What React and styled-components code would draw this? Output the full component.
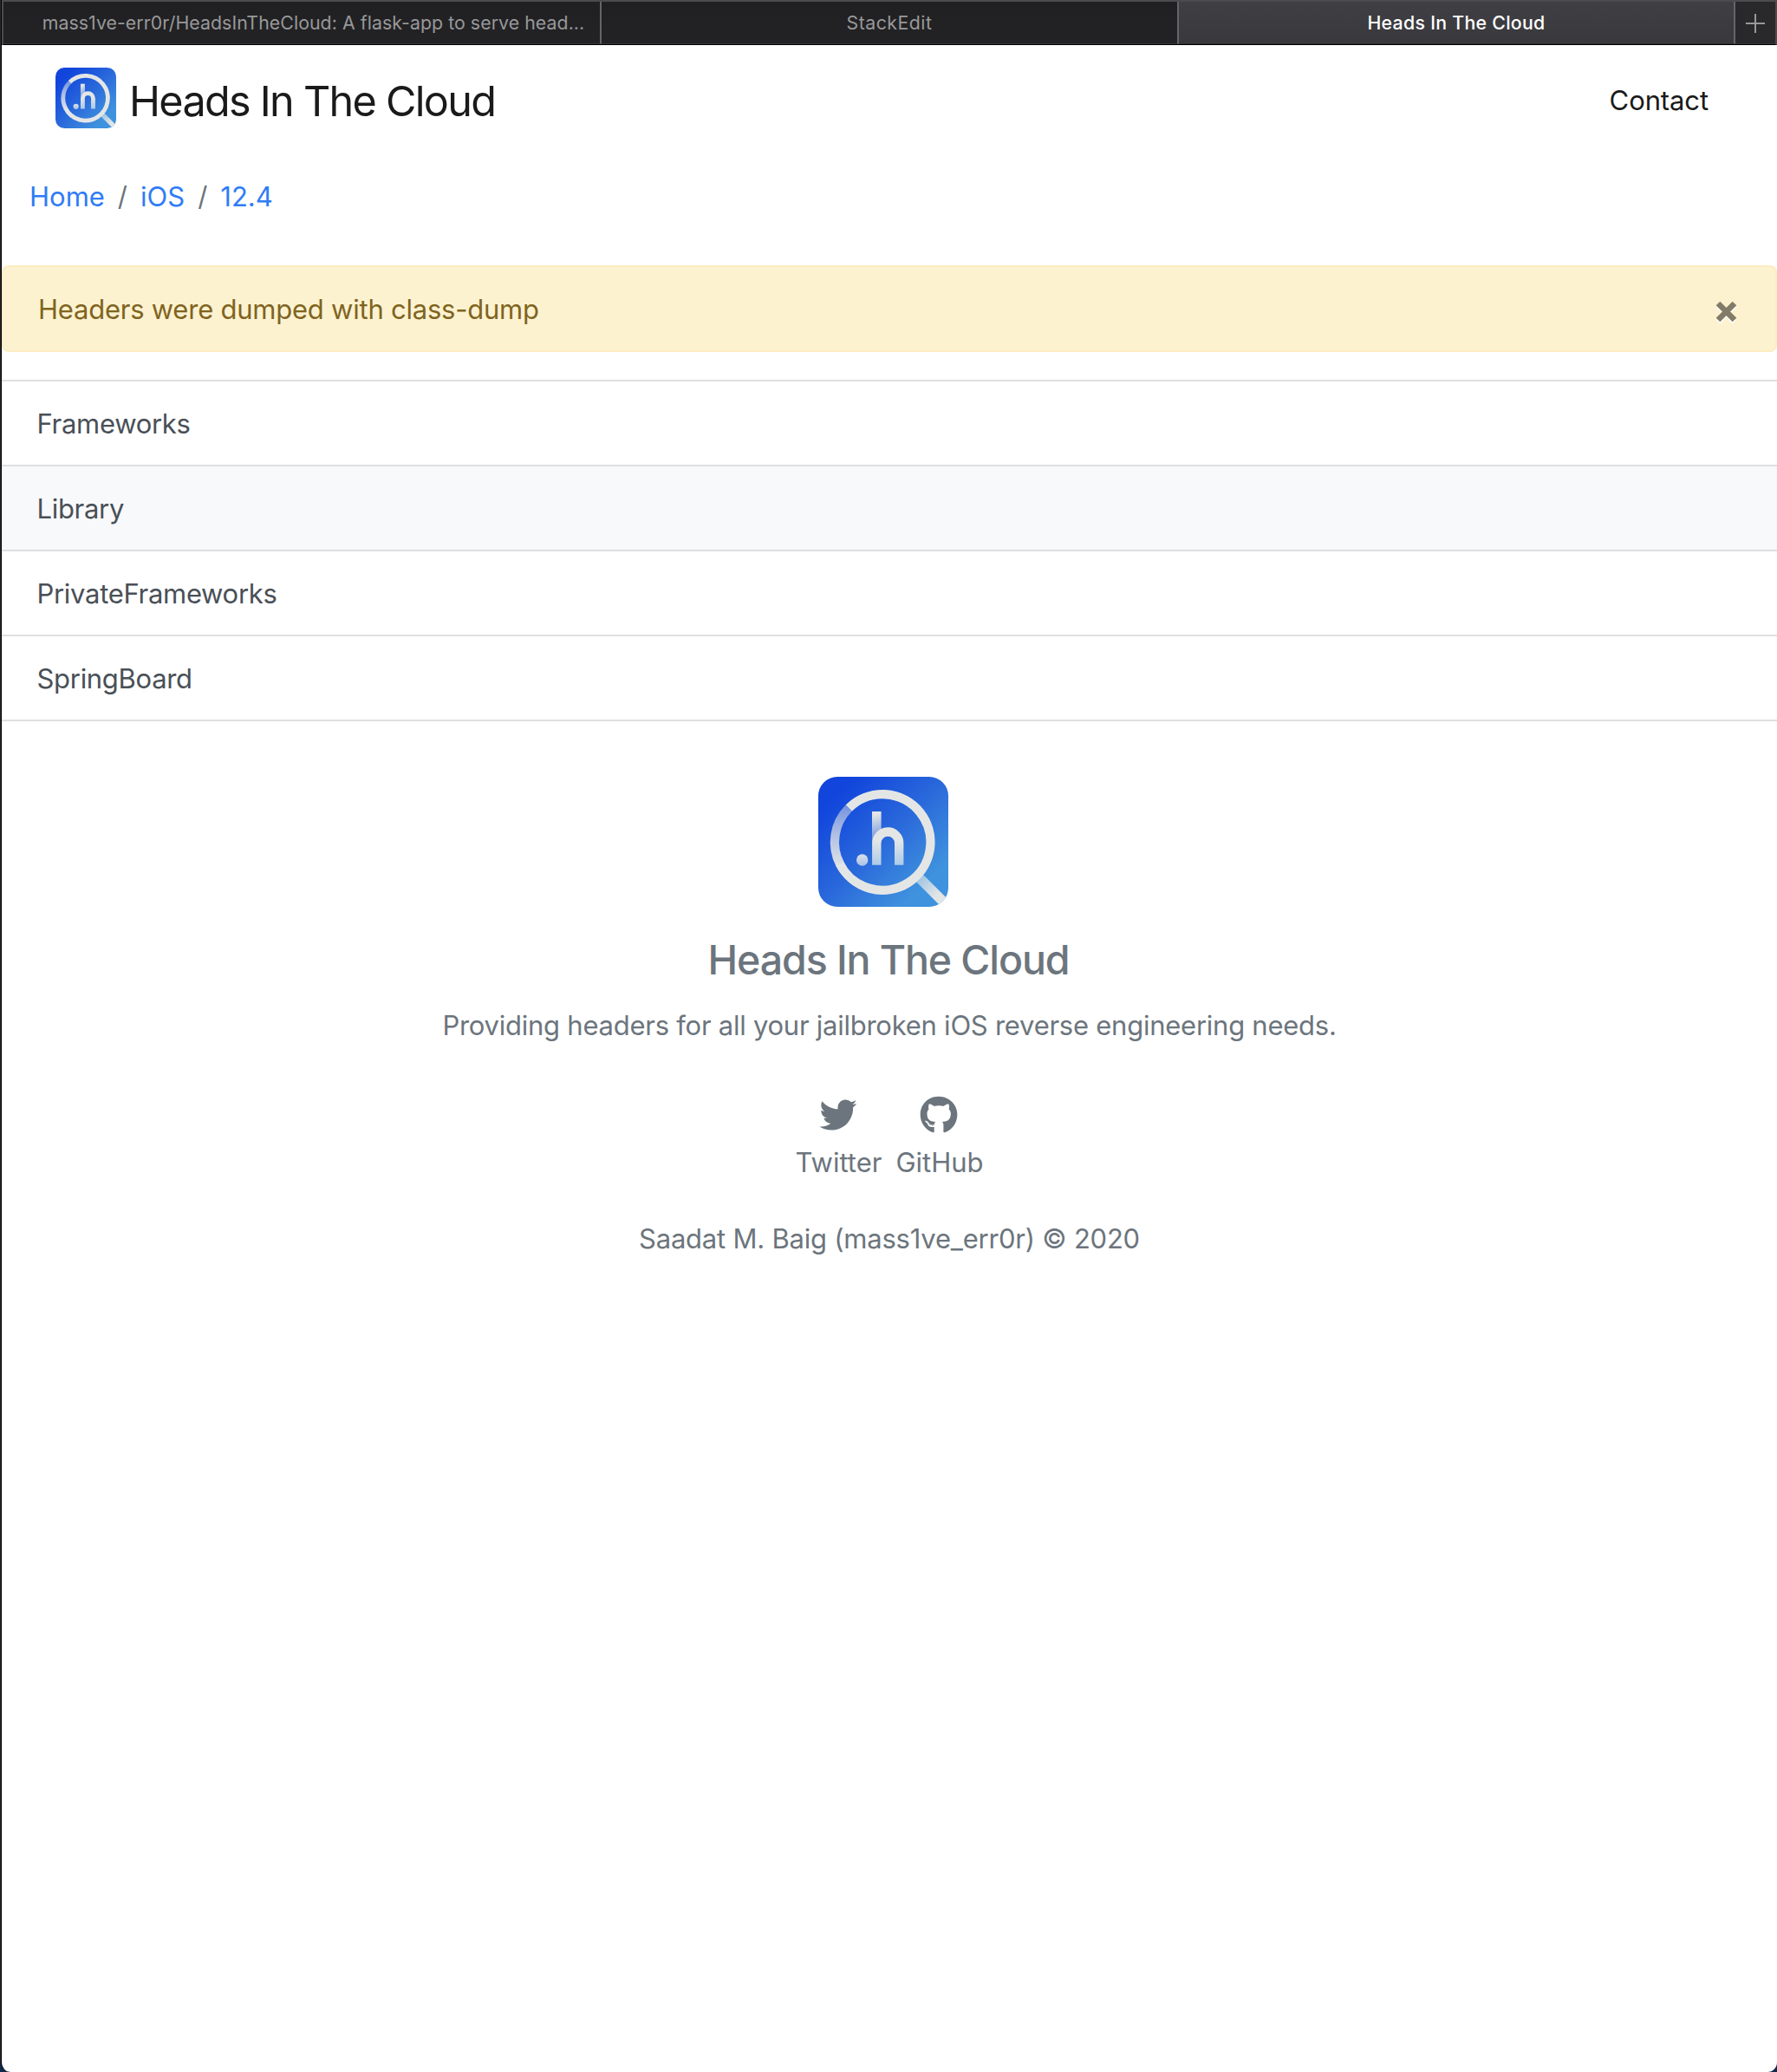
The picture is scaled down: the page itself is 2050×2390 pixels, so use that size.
import React from "react";
import styled, { createGlobalStyle } from "styled-components";
import { FaGithub, FaTwitter } from "react-icons/fa";

const GlobalStyle = createGlobalStyle`
  * { box-sizing: border-box; }
  body {
    margin: 0;
    background: #10294a;
    font-family: Inter, "Liberation Sans", sans-serif;
  }
  a { color: inherit; text-decoration: none; }
`;

const Window = styled.div`
  display: flex;
  flex-direction: column;
  height: 2390px;
  padding-left: 1px;
  background: linear-gradient(#2b2b2d 2375px, #10294a 2380px);
`;

const Edge = styled.div`
  flex: 1;
  display: flex;
  flex-direction: column;
  overflow: hidden;
  border-left: 1px solid #000;
  border-radius: 0 0 11px 11px;
  background: #fff;
`;

const TabBar = styled.div`
  display: grid;
  grid-template-columns: 690px 666px 642px 1fr;
  height: 52px;
  border: 2px solid #4c4c4f;
  border-bottom: 1px solid #000;
  background: #212123;
`;

const Tab = styled.div`
  display: flex;
  align-items: center;
  justify-content: center;
  padding-left: ${(p) => p.$indent || 0}px;
  border-right: 2px solid #656568;
  border-bottom: 1px solid ${(p) => (p.$active ? "#2e2e31" : "#343436")};
  background: ${(p) => (p.$active ? "linear-gradient(#403f44, #39383c)" : "linear-gradient(#202022, #232325)")};
  color: ${(p) => (p.$active ? "#fff" : "#98989a")};
  font-size: 21.3px;
  font-weight: ${(p) => (p.$active ? 530 : 400)};
  letter-spacing: ${(p) => p.$tracking}px;
  white-space: nowrap;
`;

const NewTab = styled.div`
  display: flex;
  align-items: center;
  justify-content: center;
  padding-top: 2px;
  border-bottom: 1px solid #343436;
  background: #29292b;
`;

const Header = styled.header`
  display: flex;
  align-items: center;
  justify-content: space-between;
  height: 122px;
  padding: 0 79px 0 62px;
`;

const Brand = styled.a`
  display: flex;
  align-items: center;
  gap: 15px;
  color: #1a1a1a;
`;

const BrandName = styled.span`
  padding-top: 8px;
  font-size: 48.5px;
  font-weight: 430;
  line-height: 60px;
  letter-spacing: -1.7px;
`;

const NavLink = styled.a`
  padding-top: 5px;
  color: #1a1a1a;
  font-size: 31px;
  line-height: 48px;
  letter-spacing: -0.1px;
`;

const Breadcrumb = styled.nav`
  display: flex;
  align-items: center;
  height: 105px;
  padding-left: 32px;
  color: #6c757d;
  font-size: 31px;
`;

const Crumb = styled.span`
  color: #2f7cf6;
  & + &::before {
    content: "/";
    padding: 0 15px;
    color: #6c757d;
  }
`;

const Alert = styled.div`
  display: flex;
  align-items: center;
  justify-content: space-between;
  height: 100px;
  margin-top: 27px;
  padding: 0 44px 0 40px;
  border: 2px solid #fcedc2;
  border-radius: 8px;
  background: #fdf2d0;
  color: #7f641f;
  font-size: 31px;
  letter-spacing: -0.23px;
`;

const CloseButton = styled.button`
  display: flex;
  margin-top: 9px;
  padding: 0;
  border: 0;
  background: none;
`;

const FolderList = styled.div`
  margin-top: 32px;
  border-top: 2px solid #dedfe0;
`;

const Folder = styled.a`
  display: flex;
  align-items: center;
  height: 98px;
  padding: 1px 0 0 40.5px;
  border-bottom: 2px solid #dedfe0;
  background: ${(p) => (p.$hovered ? "#f8f9fb" : "#fff")};
  color: #495057;
  font-size: 31px;
  letter-spacing: -0.3px;
`;

const Footer = styled.footer`
  display: flex;
  flex-direction: column;
  align-items: center;
  padding-top: 64px;
  color: #6c757d;
  font-size: 31px;
  line-height: 48px;
`;

const FooterLogo = styled.div`
  display: flex;
  margin-right: 15px;
`;

const FooterTitle = styled.h4`
  margin: 32px 2px 0 0;
  font-size: 46.5px;
  font-weight: 500;
  line-height: 58px;
  letter-spacing: -1.1px;
`;

const Tagline = styled.p`
  margin: 23px 0 0;
  letter-spacing: -0.25px;
`;

const Socials = styled.div`
  display: flex;
  gap: 16px;
  margin-top: 57px;
`;

const Social = styled.a`
  display: flex;
  flex-direction: column;
  align-items: center;
  gap: 8.5px;
  svg { height: 44px; width: 44px; padding: ${(p) => p.$inset || 0}px; margin-right: 1px; }
`;

const Copyright = styled.p`
  margin: 40px 0 0;
  letter-spacing: -0.22px;
`;

function Logo({ size, id }) {
  return (
    <svg width={size} height={size} viewBox="0 0 150 150">
      <defs>
        <linearGradient id={`${id}-bg`} x1="0" y1="0" x2="1" y2="1">
          <stop offset="0.14" stopColor="#1145dc" />
          <stop offset="0.5" stopColor="#2a69db" />
          <stop offset="0.82" stopColor="#3f92de" />
        </linearGradient>
        <linearGradient id={`${id}-ring`} gradientUnits="userSpaceOnUse" x1="0" y1="30" x2="0" y2="108">
          <stop offset="0" stopColor="#6f8fdf" />
          <stop offset="0.5" stopColor="#b4c2e3" />
          <stop offset="1" stopColor="#e4e6e6" />
        </linearGradient>
        <linearGradient id={`${id}-arch`} gradientUnits="userSpaceOnUse" x1="0" y1="74" x2="0" y2="103">
          <stop offset="0" stopColor="#e4e6e6" />
          <stop offset="1" stopColor="#a9c9e8" />
        </linearGradient>
        <linearGradient id={`${id}-stem`} gradientUnits="userSpaceOnUse" x1="64" y1="44" x2="71" y2="68">
          <stop offset="0" stopColor="#e4e6e6" />
          <stop offset="1" stopColor="#7f9fe2" />
        </linearGradient>
        <linearGradient id={`${id}-handle`} gradientUnits="userSpaceOnUse" x1="116" y1="116" x2="142" y2="142">
          <stop offset="0" stopColor="#9cc4e4" />
          <stop offset="0.8" stopColor="#e2e5e6" />
        </linearGradient>
        <linearGradient id={`${id}-dot`} x1="0" y1="0" x2="0" y2="1">
          <stop offset="0" stopColor="#dce1e7" />
          <stop offset="1" stopColor="#a9c2e9" />
        </linearGradient>
        <clipPath id={`${id}-clip`}>
          <rect width="150" height="150" rx="22" />
        </clipPath>
      </defs>
      <g clipPath={`url(#${id}-clip)`} fill="none">
        <rect width="150" height="150" fill={`url(#${id}-bg)`} />
        <path d="M113 113 L150 150" stroke={`url(#${id}-handle)`} strokeWidth="11.5" />
        <path d="M35.2 36.2 A55.3 55.3 0 1 1 24.6 100" stroke="#e4e6e6" strokeWidth="10.3" />
        <path d="M25.2 101 A55.3 55.3 0 0 1 35.2 36.2" stroke={`url(#${id}-ring)`} strokeWidth="10.3" />
      </g>
      <rect x="62" y="40" width="10.6" height="36" fill={`url(#${id}-stem)`} />
      <path d="M67.3 101.7 V76.5 a12.95 13 0 0 1 25.9 0 V101.7" fill="none" stroke={`url(#${id}-arch)`} strokeWidth="10.4" />
      <circle cx="50.7" cy="96" r="6.7" fill={`url(#${id}-dot)`} />
    </svg>
  );
}

const folders = [
  { name: "Frameworks" },
  { name: "Library", hovered: true },
  { name: "PrivateFrameworks" },
  { name: "SpringBoard" },
];

export default function App() {
  return (
    <>
      <GlobalStyle />
      <Window>
        <Edge>
          <TabBar>
            <Tab $indent={27} $tracking={0.06}>mass1ve-err0r/HeadsInTheCloud: A flask-app to serve head...</Tab>
            <Tab $tracking={0.5}>StackEdit</Tab>
            <Tab $active $tracking={0.28}>Heads In The Cloud</Tab>
            <NewTab>
              <svg width="22" height="22" viewBox="0 0 22 22">
                <path d="M11 0V22M0 11H22" stroke="#98989a" strokeWidth="2" />
              </svg>
            </NewTab>
          </TabBar>
          <Header>
            <Brand href="#">
              <Logo size={70} id="nav" />
              <BrandName>Heads In The Cloud</BrandName>
            </Brand>
            <NavLink href="#">Contact</NavLink>
          </Header>
          <Breadcrumb>
            <Crumb>Home</Crumb>
            <Crumb>iOS</Crumb>
            <Crumb>12.4</Crumb>
          </Breadcrumb>
          <Alert>
            Headers were dumped with class-dump
            <CloseButton aria-label="Close">
              <svg width="25" height="27" viewBox="0 0 25 27">
                <path d="M3 5L22 24M22 5L3 24" stroke="#fff" strokeWidth="6.6" />
                <path d="M3 3L22 22M22 3L3 22" stroke="#827b68" strokeWidth="6.6" />
              </svg>
            </CloseButton>
          </Alert>
          <FolderList>
            {folders.map((f) => (
              <Folder key={f.name} href="#" $hovered={f.hovered}>{f.name}</Folder>
            ))}
          </FolderList>
          <Footer>
            <FooterLogo><Logo size={150} id="footer" /></FooterLogo>
            <FooterTitle>Heads In The Cloud</FooterTitle>
            <Tagline>Providing headers for all your jailbroken iOS reverse engineering needs.</Tagline>
            <Socials>
              <Social href="#" $inset={0.5}><FaTwitter />Twitter</Social>
              <Social href="#"><FaGithub />GitHub</Social>
            </Socials>
            <Copyright>Saadat M. Baig (mass1ve_err0r) © 2020</Copyright>
          </Footer>
        </Edge>
      </Window>
    </>
  );
}
